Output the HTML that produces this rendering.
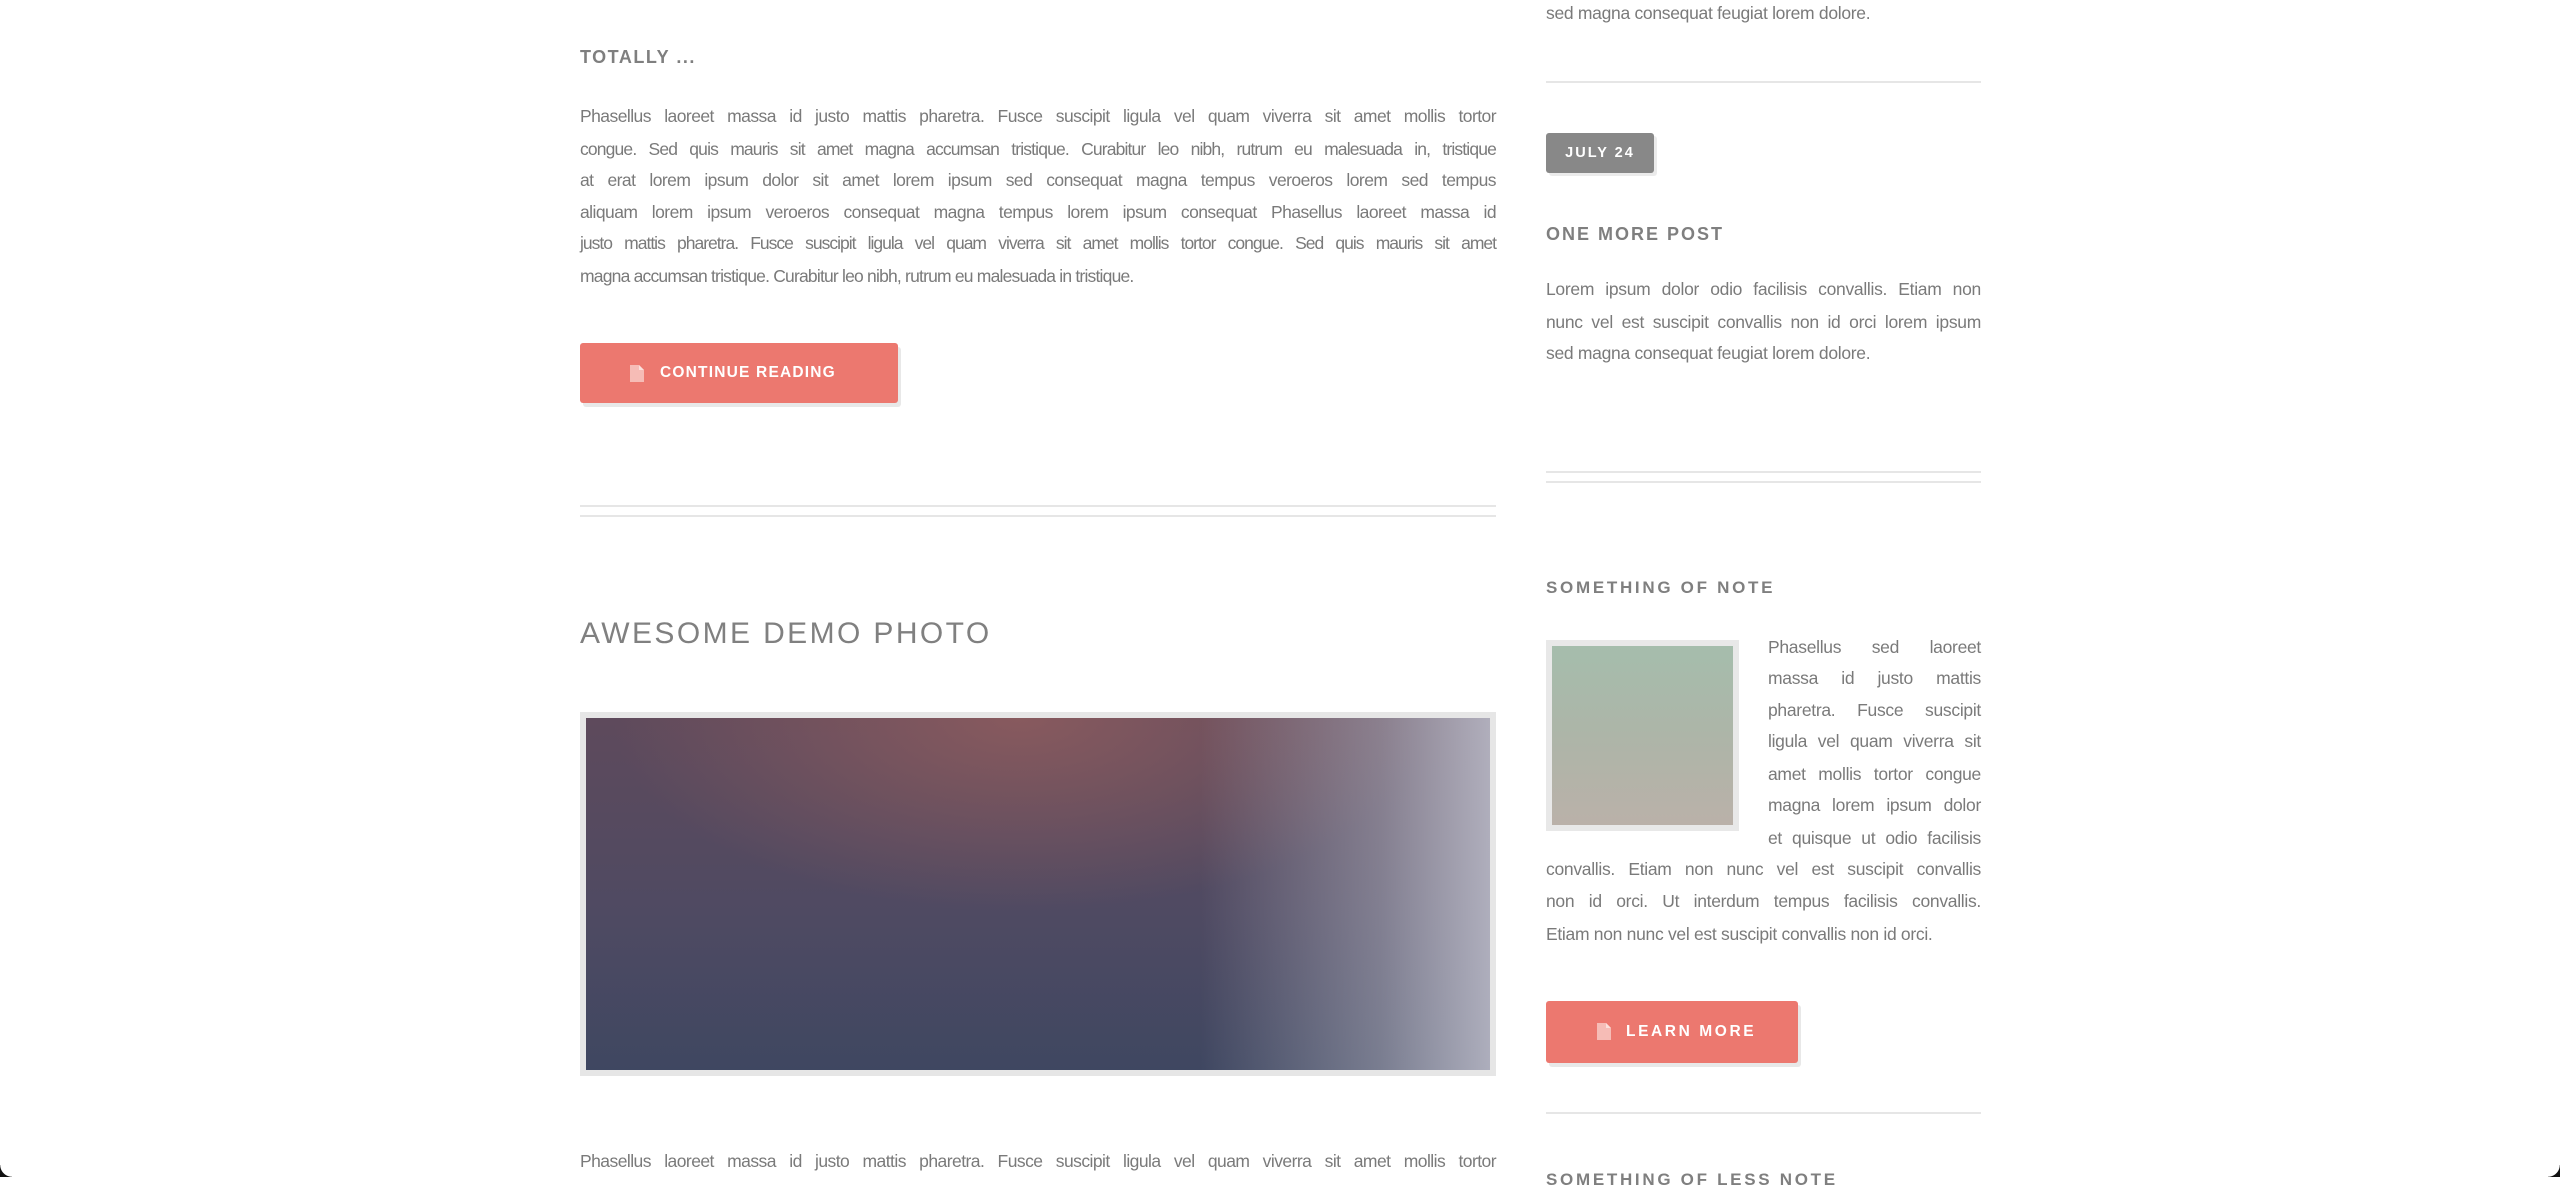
<!DOCTYPE html>
<html><head><meta charset="utf-8"><style>
*{margin:0;padding:0;box-sizing:border-box}
html,body{width:2560px;height:1177px;overflow:hidden;background:#fff;font-family:"Liberation Sans",sans-serif;color:#7a7a7a}
.a{position:absolute}
.l{position:absolute;line-height:32px;height:32px;font-size:17.5px;letter-spacing:-0.55px;text-align:justify;text-align-last:justify;white-space:nowrap;overflow:visible}
.lf{text-align:left;text-align-last:left}
.s{font-size:17.5px;letter-spacing:-0.3px}
.h{position:absolute;font-weight:bold;color:#7f7f7f;white-space:nowrap}
.rule{position:absolute;height:2px;background:#e6e6e6}
.btn{position:absolute;background:#ec786f;border-radius:3px;box-shadow:3px 4px 0 rgba(0,0,0,0.09);color:#fff;font-weight:bold;white-space:nowrap}
</style></head><body>

<div class="h" style="left:580px;top:46px;font-size:18px;letter-spacing:1.5px;line-height:22px">TOTALLY ...</div>

<div class="l" style="left:580px;top:100px;width:916px">Phasellus laoreet massa id justo mattis pharetra. Fusce suscipit ligula vel quam viverra sit amet mollis tortor</div>
<div class="l" style="left:580px;top:133px;width:916px;letter-spacing:-0.85px">congue. Sed quis mauris sit amet magna accumsan tristique. Curabitur leo nibh, rutrum eu malesuada in, tristique</div>
<div class="l" style="left:580px;top:164px;width:916px">at erat lorem ipsum dolor sit amet lorem ipsum sed consequat magna tempus veroeros lorem sed tempus</div>
<div class="l" style="left:580px;top:196px;width:916px">aliquam lorem ipsum veroeros consequat magna tempus lorem ipsum consequat Phasellus laoreet massa id</div>
<div class="l" style="left:580px;top:227px;width:916px;letter-spacing:-1px">justo mattis pharetra. Fusce suscipit ligula vel quam viverra sit amet mollis tortor congue. Sed quis mauris sit amet</div>
<div class="l lf" style="left:580px;top:260px;width:916px;letter-spacing:-0.8px">magna accumsan tristique. Curabitur leo nibh, rutrum eu malesuada in tristique.</div>

<div class="btn" style="left:580px;top:343px;width:318px;height:60px">
 <svg class="a" style="left:50px;top:22px" width="14" height="17" viewBox="0 0 14 17"><path d="M0 0H9L14 5V17H0Z" fill="#f6bcb6"/><path d="M9 0V5H14Z" fill="#fbe0dc"/></svg>
 <div class="a" style="left:80px;top:20px;font-size:15.5px;letter-spacing:1.2px;line-height:20px">CONTINUE READING</div>
</div>

<div class="rule" style="left:580px;top:505px;width:916px"></div>
<div class="rule" style="left:580px;top:515px;width:916px"></div>

<div class="a" style="left:580px;top:617px;font-size:30px;letter-spacing:2.4px;line-height:34px;color:#808080;white-space:nowrap">AWESOME DEMO PHOTO</div>

<div class="a" style="left:580px;top:712px;width:916px;height:364px;background:#e6e6e6;padding:6px">
 <div style="width:100%;height:100%;position:relative;overflow:hidden;background:linear-gradient(180deg,#5e4a5c 0%,#4f4a62 55%,#3f4761 100%)">
  <div class="a" style="inset:0;background:radial-gradient(ellipse 45% 55% at 48% 0%,rgba(150,95,95,0.75),rgba(150,95,95,0) 100%)"></div>
  <div class="a" style="inset:0;background:linear-gradient(90deg,rgba(180,180,192,0) 68%,rgba(180,180,192,0.5) 88%,rgba(185,185,198,0.9) 100%)"></div>
 </div>
</div>

<div class="l" style="left:580px;top:1145px;width:916px">Phasellus laoreet massa id justo mattis pharetra. Fusce suscipit ligula vel quam viverra sit amet mollis tortor</div>

<div class="l s lf" style="left:1546px;top:-3px;width:435px">sed magna consequat feugiat lorem dolore.</div>
<div class="rule" style="left:1546px;top:81px;width:435px"></div>

<div class="a" style="left:1546px;top:133px;width:108px;height:40px;background:#888;border-radius:3px;box-shadow:3px 3px 0 rgba(0,0,0,0.08);color:#fff;font-weight:bold;font-size:14.5px;letter-spacing:2px;line-height:40px;text-align:center">JULY 24</div>

<div class="h" style="left:1546px;top:223px;font-size:18px;letter-spacing:2px;line-height:22px">ONE MORE POST</div>

<div class="l s" style="left:1546px;top:273px;width:435px">Lorem ipsum dolor odio facilisis convallis. Etiam non</div>
<div class="l s" style="left:1546px;top:306px;width:435px">nunc vel est suscipit convallis non id orci lorem ipsum</div>
<div class="l s lf" style="left:1546px;top:337px;width:435px">sed magna consequat feugiat lorem dolore.</div>

<div class="rule" style="left:1546px;top:471px;width:435px"></div>
<div class="rule" style="left:1546px;top:481px;width:435px"></div>

<div class="h" style="left:1546px;top:577px;font-size:17px;letter-spacing:2.7px;line-height:22px">SOMETHING OF NOTE</div>

<div class="a" style="left:1546px;top:640px;width:193px;height:191px;background:#e8e8e8;padding:6px">
 <div style="width:100%;height:100%;background:linear-gradient(180deg,#a5bdac 0%,#adb5a8 50%,#bab1a9 100%)"></div>
</div>

<div class="l s" style="left:1768px;top:631px;width:213px">Phasellus sed laoreet</div>
<div class="l s" style="left:1768px;top:662px;width:213px">massa id justo mattis</div>
<div class="l s" style="left:1768px;top:694px;width:213px">pharetra. Fusce suscipit</div>
<div class="l s" style="left:1768px;top:725px;width:213px">ligula vel quam viverra sit</div>
<div class="l s" style="left:1768px;top:758px;width:213px">amet mollis tortor congue</div>
<div class="l s" style="left:1768px;top:789px;width:213px">magna lorem ipsum dolor</div>
<div class="l s" style="left:1768px;top:822px;width:213px">et quisque ut odio facilisis</div>
<div class="l s" style="left:1546px;top:853px;width:435px">convallis. Etiam non nunc vel est suscipit convallis</div>
<div class="l s" style="left:1546px;top:885px;width:435px">non id orci. Ut interdum tempus facilisis convallis.</div>
<div class="l s lf" style="left:1546px;top:918px;width:435px">Etiam non nunc vel est suscipit convallis non id orci.</div>

<div class="btn" style="left:1546px;top:1001px;width:252px;height:62px">
 <svg class="a" style="left:51px;top:22px" width="14" height="17" viewBox="0 0 14 17"><path d="M0 0H9L14 5V17H0Z" fill="#f6bcb6"/><path d="M9 0V5H14Z" fill="#fbe0dc"/></svg>
 <div class="a" style="left:80px;top:21px;font-size:15.5px;letter-spacing:2.6px;line-height:20px">LEARN MORE</div>
</div>

<div class="rule" style="left:1546px;top:1112px;width:435px"></div>

<div class="h" style="left:1546px;top:1169px;font-size:17px;letter-spacing:2.7px;line-height:22px">SOMETHING OF LESS NOTE</div>

<div class="a" style="left:0;top:1165px;width:12px;height:12px;background:radial-gradient(circle at 12px 0,transparent 11.5px,#111 12px)"></div>
<div class="a" style="right:0;top:1165px;width:12px;height:12px;background:radial-gradient(circle at 0 0,transparent 11.5px,#111 12px)"></div>
</body></html>
